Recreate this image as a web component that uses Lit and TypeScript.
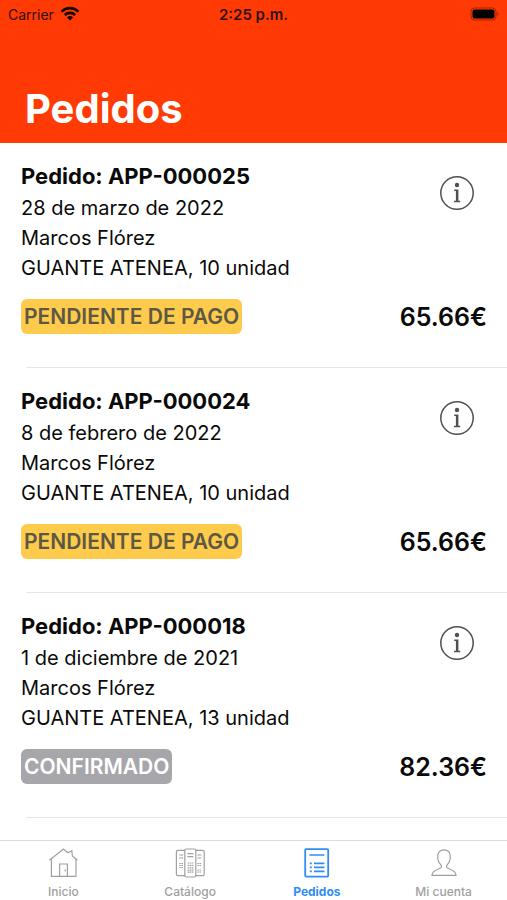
import { LitElement, html, css, svg } from "lit";
import { customElement, property } from "lit/decorators.js";
import { classMap } from "lit/directives/class-map.js";

interface Order {
  id: string;
  date: string;
  client: string;
  items: string;
  status: string;
  confirmed: boolean;
  total: string;
}

const ORDERS: Order[] = [
  { id: "APP-000025", date: "28 de marzo de 2022", client: "Marcos Flórez", items: "GUANTE ATENEA, 10 unidad", status: "PENDIENTE DE PAGO", confirmed: false, total: "65.66€" },
  { id: "APP-000024", date: "8 de febrero de 2022", client: "Marcos Flórez", items: "GUANTE ATENEA, 10 unidad", status: "PENDIENTE DE PAGO", confirmed: false, total: "65.66€" },
  { id: "APP-000018", date: "1 de diciembre de 2021", client: "Marcos Flórez", items: "GUANTE ATENEA, 13 unidad", status: "CONFIRMADO", confirmed: true, total: "82.36€" },
];

const homeIcon = svg`
  <path d="M1.4 12.2 L15.4 1 L20 4.8 L23.8 2.8 L24.4 8 L29.4 12.2" />
  <path d="M3.4 10.8 V28.3 H28 V10.8" />
  <path d="M11.6 28.3 V16 H19.4 V28.3 M17.2 21.5 V23.5" />`;

const catalogIcon = svg`
  <path d="M10 2.4 H3 Q1.4 2.4 1.4 4 V26 Q1.4 27.6 3 27.6 H10 M20.6 2.4 H27.6 Q29.2 2.4 29.2 4 V26 Q29.2 27.6 27.6 27.6 H20.6" />
  <rect x="9.8" y="1" width="11" height="28" rx="1.5" />
  <path d="M4.2 7 H8.2 M4.2 10 H8.2 M12.4 5.6 H18.4 M12.4 8.6 H18.4 M22.4 7 H26.4 M22.4 10 H26.4" />
  <path stroke-dasharray="1.6 0.5" d="M4.2 15.5 H8.2 M4.2 17.5 H8.2 M4.2 19.5 H8.2 M12.6 15 H18.4 M12.6 17.4 H18.4 M12.6 19.8 H18.4 M12.6 22.2 H18.4 M12.6 24.2 H18.4 M22.4 15.5 H26.4 M22.4 17.5 H26.4 M22.4 22 H26.4 M22.4 24 H26.4" />`;

const ordersIcon = svg`
  <rect x="3.2" y="1.2" width="23" height="27.4" rx="1" stroke-width="1.8" />
  <path stroke-width="1.6" d="M7.4 7 H22.4 M12 15.4 H22.4 M12 19.4 H22.4 M12 23.4 H22.4 M7.8 15.4 H9.8 M7.8 19.4 H9.8 M7.8 23.4 H9.8" />`;

const accountIcon = svg`
  <path d="M15 1.9 C11 1.9 8.7 4.5 8.7 8.6 C8.7 12 9.7 15 11.8 16.8 C12.7 17.6 12.7 19.4 11.6 20.1 C8.6 21.8 3 22 3 27.4 H27 C27 22 21.4 21.8 18.4 20.1 C17.3 19.4 17.3 17.6 18.2 16.8 C20.3 15 21.3 12 21.3 8.6 C21.3 4.5 19 1.9 15 1.9 Z" />`;

const TABS = [
  { label: "Inicio", icon: homeIcon, active: false },
  { label: "Catálogo", icon: catalogIcon, active: false },
  { label: "Pedidos", icon: ordersIcon, active: true },
  { label: "Mi cuenta", icon: accountIcon, active: false },
];

@customElement("status-bar")
class StatusBar extends LitElement {
  static styles = css`
    :host {
      display: grid;
      grid-template-columns: 1fr auto 1fr;
      align-items: center;
      height: 28px;
      padding: 0 8px;
      font-size: 14px;
      color: #301008;
    }
    .carrier { display: flex; align-items: center; gap: 6px; }
    .glyph { display: block; }
    .time { font-size: 15px; font-weight: 600; }
    .battery { justify-self: end; display: block; }
  `;
  render() {
    return html`
      <span class="carrier">
        Carrier
        <svg class="glyph" width="20" height="16" viewBox="0 0 20 16" fill="none" stroke="#120400" stroke-width="2.6" aria-hidden="true">
          <path d="M1.6 5.6 C6.3 1 13.7 1 18.4 5.6" />
          <path d="M4.8 9 C7.7 6.2 12.3 6.2 15.2 9" />
          <path d="M10 14.4 L7 11.4 Q10 8.8 13 11.4 Z" fill="#120400" stroke="none" />
        </svg>
      </span>
      <span class="time">2:25 p.m.</span>
      <svg class="battery" width="30" height="14" viewBox="0 0 30 14" aria-hidden="true">
        <rect x="2" y="1" width="25" height="12" rx="3.5" fill="none" stroke="#a02400" />
        <rect x="3.5" y="2.5" width="22" height="9" rx="2" />
        <path d="M28.2 5 Q30.4 7 28.2 9 Z" fill="#a02400" />
      </svg>`;
  }
}

@customElement("order-row")
class OrderRow extends LitElement {
  @property({ attribute: false }) order!: Order;

  static styles = css`
    :host { display: block; padding-left: 21px; }
    .content { padding: 18px 20px 33px 0; }
    .top { display: flex; justify-content: space-between; align-items: flex-start; }
    .title { margin: 0 0 2px; font-size: 22px; line-height: 30px; font-weight: 700; }
    .line { margin: 0; font-size: 20px; line-height: 30px; }
    .info {
      flex: none;
      width: 36px;
      height: 36px;
      margin: 14px 12px 0 0;
      padding: 0;
      border: 0;
      background: none;
    }
    .glyph { display: block; }
    .bottom { display: flex; justify-content: space-between; align-items: center; margin-top: 16px; }
    .badge {
      padding: 1px 3px 0;
      border-radius: 6px;
      background: #ffcb4d;
      color: #5c5843;
      font-size: 21px;
      line-height: 34px;
      font-weight: 600;
    }
    .confirmed { background: #a6a6ab; color: #fff; }
    .total { padding-top: 1px; font-size: 25px; line-height: 34px; font-weight: 600; }
    .divider { height: 1px; margin: 0 0 0 5px; border: 0; background: #e6e6e8; }
  `;
  render() {
    const o = this.order;
    return html`
      <article class="content">
        <div class="top">
          <div>
            <h2 class="title">Pedido: ${o.id}</h2>
            <p class="line">${o.date}</p>
            <p class="line">${o.client}</p>
            <p class="line">${o.items}</p>
          </div>
          <button class="info" type="button" aria-label="Información del pedido ${o.id}">
            <svg class="glyph" width="36" height="36" viewBox="0 0 36 36" fill="#505052" aria-hidden="true">
              <circle cx="18" cy="18" r="16.2" fill="none" stroke="#505052" stroke-width="1.5" />
              <circle cx="18" cy="10" r="2.2" />
              <path d="M15.2 14.6 H19.4 V25.8 H21.2 V27.2 H15 V25.8 H16.9 V16 H15.2 Z" />
            </svg>
          </button>
        </div>
        <div class="bottom">
          <span class=${classMap({ badge: true, confirmed: o.confirmed })}>${o.status}</span>
          <span class="total">${o.total}</span>
        </div>
      </article>
      <hr class="divider" />`;
  }
}

@customElement("app-root")
class AppRoot extends LitElement {
  static styles = css`
    :host {
      display: flex;
      flex-direction: column;
      min-height: 100vh;
      background: #fff;
      color: #0a0a0a;
      font-family: Inter, "Liberation Sans", sans-serif;
    }
    .header { background: #ff3a04; padding-bottom: 9px; }
    .heading {
      margin: 56px 0 0;
      padding: 0 25px;
      color: #fff;
      font-size: 40px;
      line-height: 50px;
      font-weight: 700;
    }
    .list { flex: 1; }
    .tabs {
      position: sticky;
      bottom: 0;
      display: grid;
      grid-template-columns: repeat(4, 1fr);
      border-top: 1px solid #dcdcdc;
      background: #fff;
    }
    .tab {
      display: flex;
      flex-direction: column;
      align-items: center;
      gap: 6px;
      padding: 7px 0 0;
      color: #a0a0a0;
      font-size: 12px;
      line-height: 16px;
      font-weight: 500;
      text-decoration: none;
    }
    .active { color: #2f8df5; font-weight: 700; }
    .icon { display: block; }
  `;
  render() {
    return html`
      <header class="header">
        <status-bar></status-bar>
        <h1 class="heading">Pedidos</h1>
      </header>
      <main class="list">
        ${ORDERS.map((o) => html`<order-row .order=${o}></order-row>`)}
      </main>
      <nav class="tabs">
        ${TABS.map(
          (t) => html`
            <a class=${classMap({ tab: true, active: t.active })} href="#" aria-current=${t.active ? "page" : "false"}>
              <svg class="icon" width="30" height="30" viewBox="0 0 30 30" fill="none" stroke="currentColor" stroke-width="1.2" aria-hidden="true">${t.icon}</svg>
              ${t.label}
            </a>`
        )}
      </nav>`;
  }
}
